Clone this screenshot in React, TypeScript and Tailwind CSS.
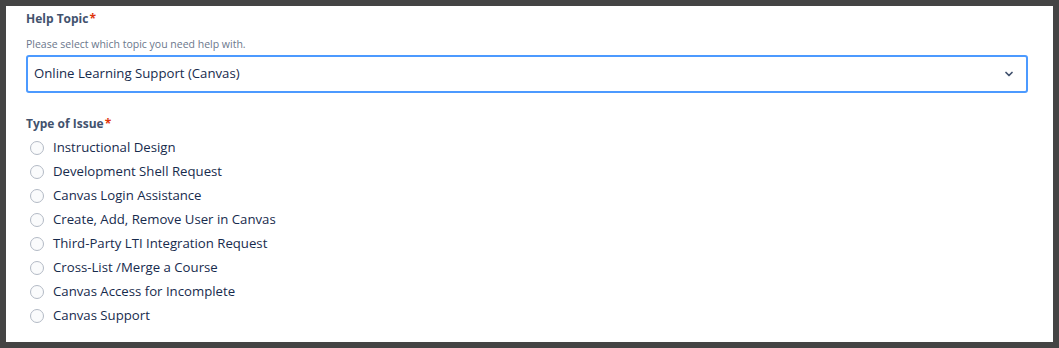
import { ChevronDown } from "lucide-react";

const issueTypes = [
  "Instructional Design",
  "Development Shell Request",
  "Canvas Login Assistance",
  "Create, Add, Remove User in Canvas",
  "Third-Party LTI Integration Request",
  "Cross-List /Merge a Course",
  "Canvas Access for Incomplete",
  "Canvas Support",
];

export default function App() {
  return (
    <div
      className="h-[348px] w-[1059px] bg-[#444444] p-[6px]"
      style={{ fontFamily: '"Open Sans", "Noto Sans", sans-serif' }}
    >
      <div className="h-full bg-white pl-[20px] pr-[25px] pt-[5px]">
        <div className="flex items-center text-[12px] font-bold leading-[16px] text-[#42526e]">
          Help Topic<span className="ml-[1px] text-[#de350b]">*</span>
        </div>
        <div className="mt-[10px] text-[10.5px] leading-[14px] text-[#6b778c]">
          Please select which topic you need help with.
        </div>
        <div className="mt-[4px] flex h-[38px] items-center justify-between rounded-[3px] border-2 border-[#4c9aff] bg-white pl-[6px] pr-[11px]">
          <span className="text-[13.2px] text-[#172b4d]">Online Learning Support (Canvas)</span>
          <ChevronDown className="h-[12px] w-[12px] text-[#42526e]" strokeWidth={3.5} />
        </div>
        <div className="mt-[23px] flex items-center text-[12px] font-bold leading-[16px] text-[#42526e]">
          Type of Issue<span className="ml-[1px] text-[#de350b]">*</span>
        </div>
        <div className="mt-[4px] flex flex-col">
          {issueTypes.map((t) => (
            <label key={t} className="flex h-[24px] items-center">
              <span className="ml-[4px] h-[14px] w-[14px] rounded-full border border-[#b3bac5] bg-[#fafbfc]" />
              <span className="ml-[9px] text-[13.2px] text-[#172b4d]">{t}</span>
            </label>
          ))}
        </div>
      </div>
    </div>
  );
}
